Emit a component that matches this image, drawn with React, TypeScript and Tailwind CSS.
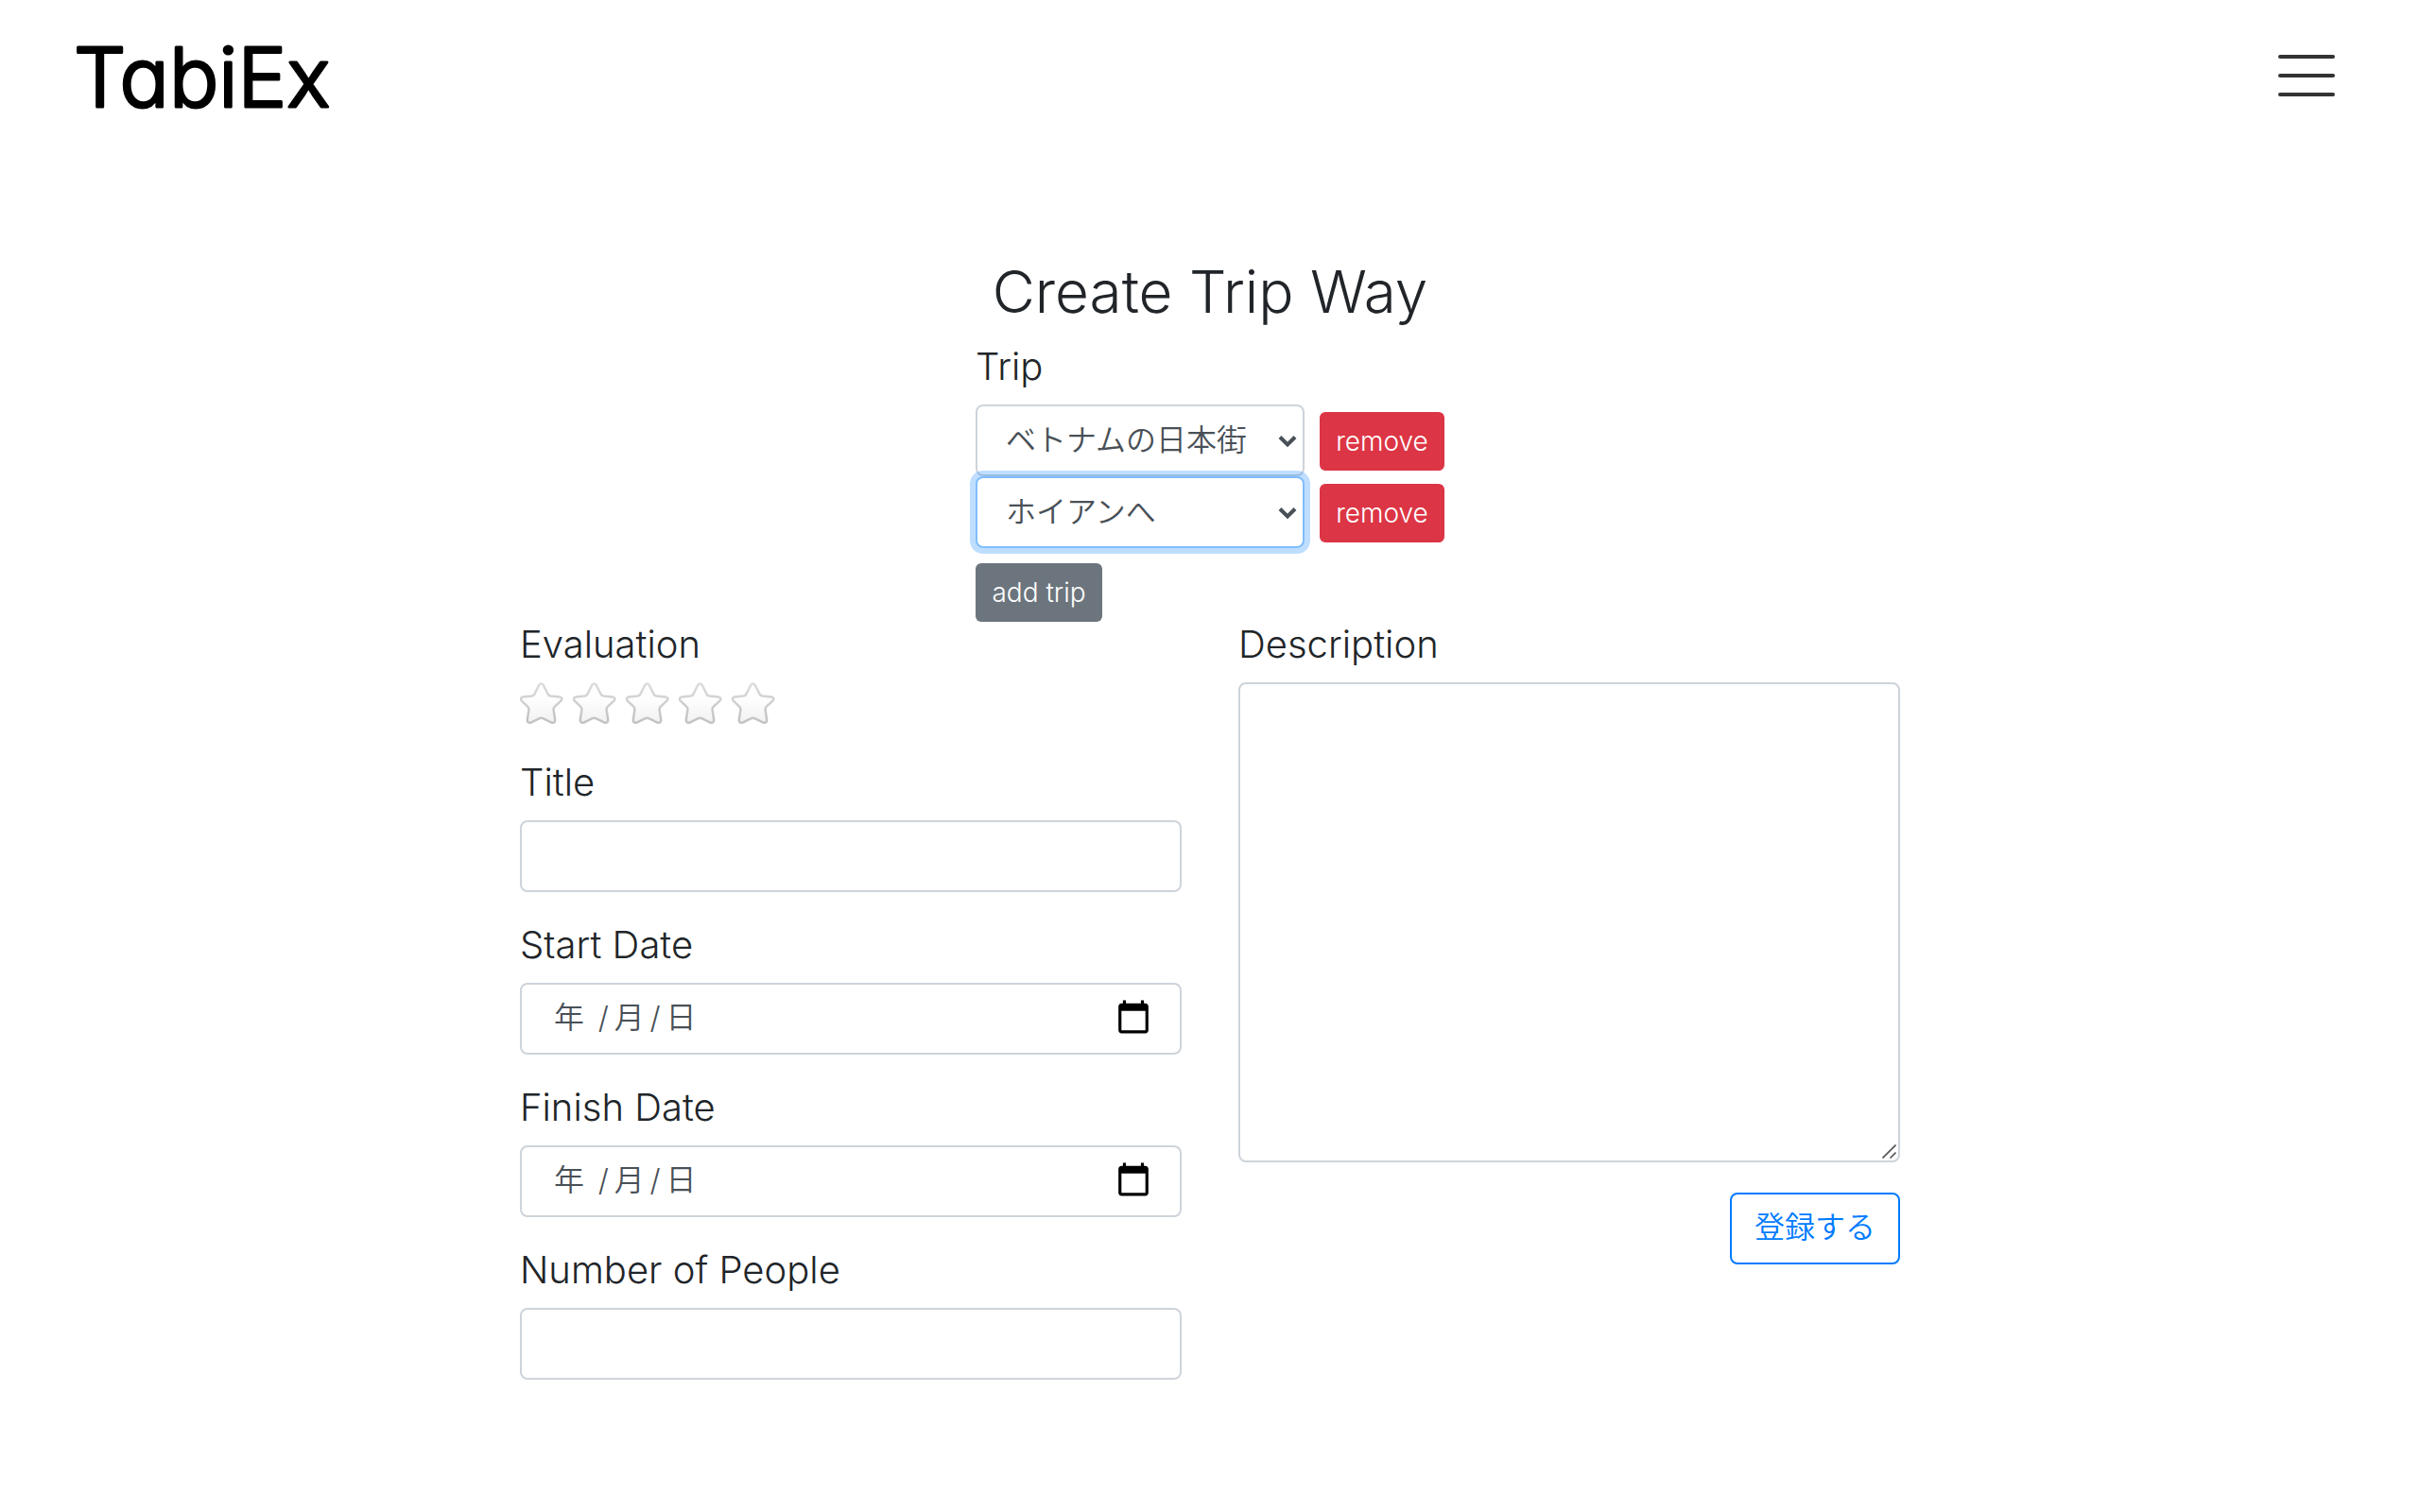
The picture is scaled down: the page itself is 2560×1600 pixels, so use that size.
import React from "react";

const fieldBox =
  "h-[76px] w-full rounded-lg border-2 border-[#ced4da] bg-white px-[34px] pb-2 text-[32px] font-[350] text-[#495057] outline-none";
const labelText = "mb-4 block text-[40px] leading-[48px]";

function Logo() {
  return (
    <a href="#" aria-label="TabiEx" className="block">
      <svg width="290" height="90" viewBox="0 0 290 90" className="block overflow-visible">
        <text
          x="0"
          y="78"
          fontSize="87"
          fill="#000"
          stroke="#000"
          strokeWidth="3"
          strokeLinejoin="round"
          className="font-['Inter',sans-serif] font-light [font-feature-settings:'cv11']"
        >
          TabiEx
        </text>
      </svg>
    </a>
  );
}

function TripSelect({ label, value, active }: { label: string; value: string; active?: boolean }) {
  return (
    <div className="grid grid-cols-[348px_132px] items-center gap-4">
      <div className="relative">
        <select
          aria-label={label}
          className={
            "block h-[76px] w-full appearance-none rounded-lg border-2 bg-white px-[30px] text-[32px] font-[350] text-[#495057] outline-none " +
            (active ? "border-[#80bdff] ring-[6px] ring-[#007bff]/25" : "border-[#ced4da]")
          }
        >
          <option>{value}</option>
        </select>
        <svg
          className="pointer-events-none absolute top-8 right-2"
          width="20"
          height="14"
          viewBox="0 0 20 14"
          fill="none"
          stroke="#495057"
          strokeWidth="4"
          aria-hidden="true"
        >
          <path d="M2 2.500l8 8 8-8" />
        </svg>
      </div>
      <button type="button" className="mt-0.5 h-[62px] rounded-md bg-[#dc3545] text-[28px] font-light text-white">
        remove
      </button>
    </div>
  );
}

function Star({ index }: { index: number }) {
  return (
    <button type="button" aria-label={`${index} stars`} className="block">
      <svg width="46" height="45" viewBox="0 0 46 45" className="block">
        <defs>
          <linearGradient id="star-fill" x1="0" y1="0" x2="0" y2="1">
            <stop offset="0" stopColor="#ffffff" />
            <stop offset="0.45" stopColor="#fdfdfd" />
            <stop offset="1" stopColor="#f1f1f1" />
          </linearGradient>
          <linearGradient id="star-edge" x1="0" y1="0" x2="0" y2="1">
            <stop offset="0" stopColor="#dcdcdc" />
            <stop offset="1" stopColor="#c2c2c2" />
          </linearGradient>
        </defs>
        <path
          d="M20.2 3Q22.500-.2 24.800 3L29.500 12.400Q30.500 14.300 32.600 14.600L42.400 15.600Q45.800 16.600 43.400 19.600L36.900 25.600Q35.300 27.200 35.600 29.400L37.200 39.600Q37.300 43.600 33.400 42.600L24.800 38.300Q22.500 37.300 20.200 38.300L11.600 42.600Q7.700 43.600 7.800 39.600L9.400 29.400Q9.700 27.200 8.100 25.600L1.800 19.600Q-.4 16.600 2.800 15.600L12.400 14.600Q14.500 14.300 15.500 12.400Z"
          fill="url(#star-fill)"
          stroke="url(#star-edge)"
          strokeWidth="2.5"
          strokeLinejoin="round"
        />
      </svg>
    </button>
  );
}

function TextField({ id, label }: { id: string; label: string }) {
  return (
    <div>
      <label htmlFor={id} className={labelText}>
        {label}
      </label>
      <input id={id} type="text" className={fieldBox} />
    </div>
  );
}

function DateField({ id, label }: { id: string; label: string }) {
  return (
    <div>
      <label htmlFor={id} className={labelText}>
        {label}
      </label>
      <div className="relative">
        <input
          id={id}
          type="text"
          defaultValue={"年 \u2009/\u2009月\u2009/\u2009日"}
          className={fieldBox}
        />
        <button type="button" aria-label={`${label} calendar`} className="absolute top-[17px] right-8">
          <svg width="38" height="38" viewBox="0 0 24 24" fill="#000" className="block">
            <path d="M20 3h-1V1h-2v2H7V1H5v2H4c-1.1 0-2 .9-2 2v16c0 1.1.9 2 2 2h16c1.1 0 2-.9 2-2V5c0-1.1-.9-2-2-2zm0 18H4V8h16v13z" />
          </svg>
        </button>
      </div>
    </div>
  );
}

export default function App() {
  return (
    <div className="min-h-screen bg-white font-['Inter','Noto_Sans_CJK_JP',sans-serif] font-light text-[#212529]">
      <header className="flex h-40 items-center justify-between pr-[90px] pl-[78px]">
        <Logo />
        <button type="button" aria-label="Menu" className="flex w-[60px] flex-col gap-4">
          <span className="h-1 w-full rounded-full bg-[#333]" />
          <span className="h-1 w-full rounded-full bg-[#333]" />
          <span className="h-1 w-full rounded-full bg-[#333]" />
        </button>
      </header>

      <main className="mx-auto max-w-[1460px] pt-[110px] pb-20">
        <h1 className="mb-4 text-center text-[62px] leading-[78px]">Create Trip Way</h1>

        <form onSubmit={(e) => e.preventDefault()}>
          <fieldset className="mx-auto w-fit">
            <legend className={labelText}>Trip</legend>
            <TripSelect label="Trip 1" value="ベトナムの日本街" />
            <TripSelect label="Trip 2" value="ホイアンへ" active />
            <button
              type="button"
              className="mt-4 block h-[62px] w-[134px] rounded-md bg-[#6c757d] text-[28px] font-light text-white"
            >
              add trip
            </button>
          </fieldset>

          <div className="grid grid-cols-2 gap-[60px]">
            <div className="flex flex-col gap-8">
              <div>
                <div className="mb-4 text-[40px] leading-[48px]">Evaluation</div>
                <div className="flex h-[50px] items-start gap-[10px]" role="group" aria-label="Evaluation">
                  {[1, 2, 3, 4, 5].map((n) => (
                    <Star key={n} index={n} />
                  ))}
                </div>
              </div>
              <TextField id="title" label="Title" />
              <DateField id="start" label="Start Date" />
              <DateField id="finish" label="Finish Date" />
              <TextField id="people" label="Number of People" />
            </div>

            <div>
              <label htmlFor="description" className={labelText}>
                Description
              </label>
              <div className="relative">
                <textarea
                  id="description"
                  className="block h-[508px] w-full resize-none rounded-lg border-2 border-[#ced4da] bg-white px-8 py-4 text-[32px] text-[#495057] outline-none"
                />
                <svg
                  className="pointer-events-none absolute right-1 bottom-1"
                  width="15"
                  height="15"
                  viewBox="0 0 15 15"
                  stroke="#555"
                  strokeWidth="1.6"
                  aria-hidden="true"
                >
                  <path d="M.5 14.5l14-14M8.500 14.500l6-6" />
                </svg>
              </div>
              <div className="mt-8 flex justify-end">
                <button
                  type="submit"
                  className="h-[76px] rounded-lg border-2 border-[#007bff] px-6 pb-0.5 text-[32px] font-[350] text-[#007bff]"
                >
                  登録する
                </button>
              </div>
            </div>
          </div>
        </form>
      </main>
    </div>
  );
}
